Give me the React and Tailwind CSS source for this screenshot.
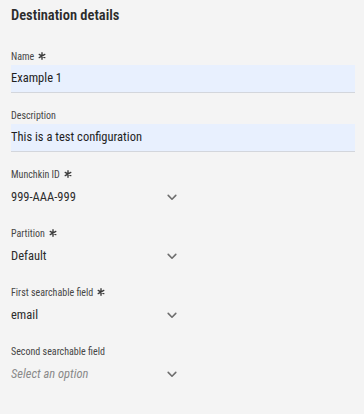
import React from "react";

const Star = () => (
  <svg width="8" height="8" viewBox="0 0 10 10" className="ml-[4px] inline-block" fill="none" stroke="#3a3a3a" strokeWidth="1.7" strokeLinecap="round">
    <path d="M5 1 L5 9 M1.5 3 L8.5 7 M8.5 3 L1.5 7" />
  </svg>
);

const Chevron = () => (
  <svg width="10" height="7" viewBox="0 0 10 7" fill="none">
    <path d="M1.2 1.4 L5 5.2 L8.8 1.4" stroke="#6e6e6e" strokeWidth="1.6" strokeLinecap="round" strokeLinejoin="round" />
  </svg>
);

function Label({ children, required }) {
  return (
    <div className="flex items-center h-[14px] text-[10px] text-[#464646]">
      <span>{children}</span>
      {required && <Star />}
    </div>
  );
}

function TextField({ label, value, required }) {
  return (
    <div className="flex flex-col">
      <Label required={required}>{label}</Label>
      <div className="mt-[2px] h-[28px] w-[344px] bg-[#e8f0fe] border-b border-[#d3d6dc] flex items-center text-[12.5px] text-[#1f1f1f]">
        {value}
      </div>
    </div>
  );
}

function Picker({ label, value, required, placeholder }) {
  return (
    <div className="flex flex-col">
      <Label required={required}>{label}</Label>
      <div className="mt-[3px] h-[27px] w-[168px] flex items-center justify-between pr-[2px]">
        <span className={placeholder ? "text-[12.5px] italic text-[#8a8a8a]" : "text-[12.5px] text-[#2c2c2c]"}>{value}</span>
        <Chevron />
      </div>
    </div>
  );
}

export default function App() {
  return (
    <div className="w-[364px] h-[414px] bg-[#f4f4f4] px-[11px] pt-[5px]" style={{ fontFamily: '"Roboto Condensed", Roboto, sans-serif' }}>
      <div className="text-[14.5px] font-semibold text-[#2c2c2c] h-[22px] flex items-center">Destination details</div>
      <div className="mt-[22px] flex flex-col gap-[15px]">
        <TextField label="Name" value="Example 1" required />
        <TextField label="Description" value="This is a test configuration" />
        <Picker label="Munchkin ID" value="999-AAA-999" required />
        <Picker label="Partition" value="Default" required />
        <Picker label="First searchable field" value="email" required />
        <Picker label="Second searchable field" value="Select an option" placeholder />
      </div>
    </div>
  );
}
